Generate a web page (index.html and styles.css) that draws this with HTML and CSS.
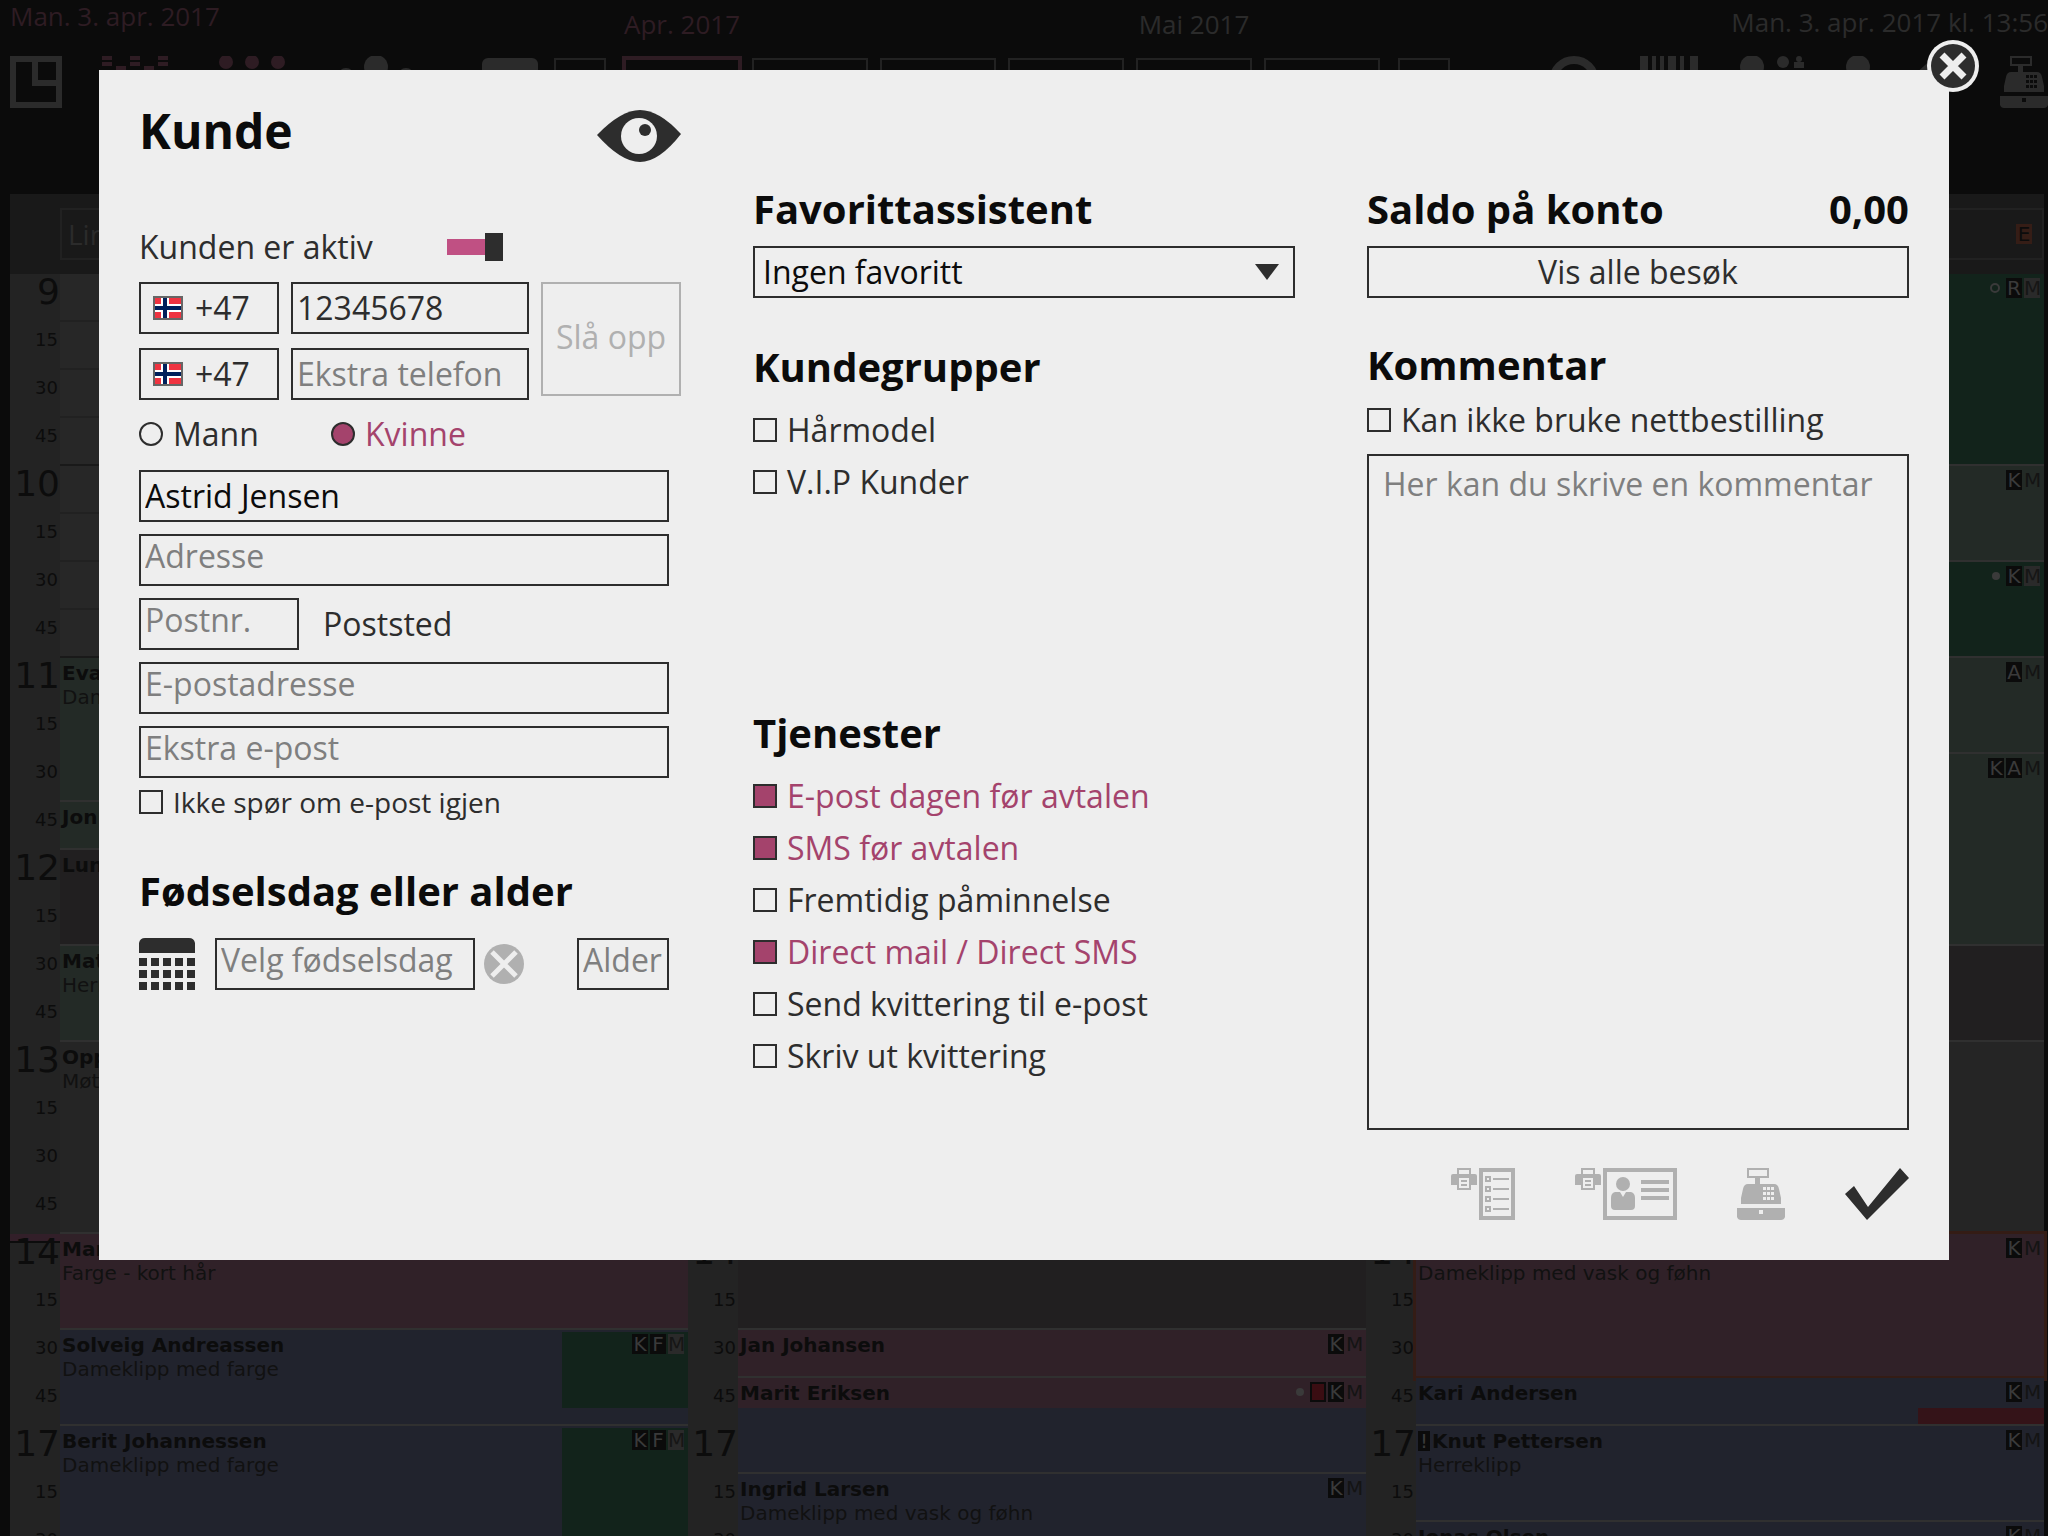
FILE: index.html
```html
<!DOCTYPE html>
<html lang="no">
<head>
<meta charset="utf-8">
<meta name="viewport" content="width=device-width, initial-scale=1">
<title>Kunde</title>
<link rel="stylesheet" href="styles.css">
</head>
<body>
<svg class="defs" aria-hidden="true">
  <symbol id="register" viewBox="0 0 48 52">
    <path fill="currentColor" fill-rule="evenodd" d="M10 0h22v10h-9v6h14q4 0 5 5l2 9v6H4v-6l2-9q1-5 5-5h7v-6h-8zM12 2v6h18V2zM26 19v3h3v-3zM30 19v3h3v-3zM34 19v3h3v-3zM26 24v3h3v-3zM30 24v3h3v-3zM34 24v3h3v-3zM26 29v3h3v-3zM30 29v3h3v-3zM34 29v3h3v-3zM0 40h48v9q-1 3-4 3H4q-3 0-4-3zM22 42v4h4v-4z"/>
  </symbol>
  <symbol id="printer" viewBox="0 0 26 22">
    <path fill="currentColor" fill-rule="evenodd" d="M6 0h14v6h4q2 0 2 2v9h-6v5H6v-5H0V8q0-2 2-2h4zM8 2v4h10V2zM8 10v10h10V10zM10 12h6v2h-6zM10 16h6v2h-6z"/>
  </symbol>
  <symbol id="flag" viewBox="0 0 30 24">
    <path fill="#ef3340" d="M0 0h30v24H0z"/>
    <path fill="#fff" d="M8 0h8v24H8zM0 8h30v8H0z"/>
    <path fill="#00205b" d="M10 0h4v24h-4zM0 10h30v4H0z"/>
    <path fill="none" stroke="#666" stroke-width="2" d="M1 1h28v22H1z"/>
  </symbol>
</svg>

<header class="topbar">
  <div class="topbar-left">
    <p class="today">Man. 3. apr. 2017</p>
    <div class="tools">
      <svg width="52" height="52" viewBox="0 0 52 52"><path fill="none" stroke="currentColor" stroke-width="6" d="M3 3h46v46H3zM25 3v24h24"/></svg>
      <svg class="pink" width="66" height="52" viewBox="0 0 66 52"><path fill="currentColor" d="M0 0h10v4H0zM0 6h10v4H0zM14 10h10v4H14zM28 0h10v4H28zM28 6h10v4H28zM42 10h10v4H42zM56 0h10v4H56zM56 6h10v4H56z"/></svg>
      <svg class="pink" width="77" height="52" viewBox="-11 0 77 52"><g fill="currentColor"><circle cx="7" cy="6" r="7"/><circle cx="33" cy="6" r="7"/><circle cx="59" cy="6" r="7"/></g></svg>
      <svg width="87" height="52" viewBox="-15 0 87 52"><g fill="currentColor"><circle cx="36" cy="11" r="12"/><circle cx="6" cy="20" r="8"/><circle cx="66" cy="20" r="8"/></g></svg>
      <svg width="86" height="52" viewBox="-30 0 86 52"><rect y="2" width="56" height="40" rx="6" fill="currentColor"/></svg>
    </div>
  </div>
  <nav class="dates" aria-label="Datoer">
    <div class="date step"><button type="button" aria-label="Forrige"></button></div>
    <div class="date current"><span>Apr. 2017</span><button type="button" aria-label="Dag 1"></button></div>
    <div class="date"><button type="button" aria-label="Dag 2"></button></div>
    <div class="date"><button type="button" aria-label="Dag 3"></button></div>
    <div class="date"><button type="button" aria-label="Dag 4"></button></div>
    <div class="date"><span>Mai 2017</span><button type="button" aria-label="Dag 5"></button></div>
    <div class="date"><button type="button" aria-label="Dag 6"></button></div>
    <div class="date step"><button type="button" aria-label="Neste"></button></div>
  </nav>
  <div class="topbar-right">
    <p class="clock">Man. 3. apr. 2017 kl. 13:56</p>
    <div class="tools">
      <svg width="52" height="52" viewBox="0 0 52 52"><circle cx="26" cy="25" r="21" fill="none" stroke="currentColor" stroke-width="8"/></svg>
      <svg width="58" height="52" viewBox="0 0 58 52"><path fill="currentColor" d="M0 0h8v40H0zM12 0h4v40h-4zM20 0h4v40h-4zM28 0h8v40h-8zM40 0h4v40h-4zM50 0h8v40h-8z"/></svg>
      <svg width="68" height="52" viewBox="0 0 68 52"><g fill="currentColor"><circle cx="14" cy="11" r="12"/><circle cx="45" cy="6" r="6"/><circle cx="61" cy="3" r="3"/><path d="M36 14h8v4h-8zM48 14h8v4h-8zM56 6h10v6H56z"/></g></svg>
      <svg width="24" height="52" viewBox="0 0 24 52"><circle cx="12" cy="11" r="12" fill="currentColor"/></svg>
      <svg width="50" height="52" viewBox="0 0 50 52"><path fill="currentColor" d="M25 0l24 24-18 18q-6 0-12-6L3 20z"/></svg>
      <svg width="48" height="52"><use href="#register"/></svg>
    </div>
  </div>
</header>

<main class="calendar">
  <section class="day">
    <div class="day-head"><div class="staff">Lin</div></div>
    <div class="day-body">
      <ol class="times">
        <li class="hour">9</li><li>15</li><li>30</li><li>45</li>
        <li class="hour">10</li><li>15</li><li>30</li><li>45</li>
        <li class="hour">11</li><li>15</li><li>30</li><li>45</li>
        <li class="hour">12</li><li>15</li><li>30</li><li>45</li>
        <li class="hour">13</li><li>15</li><li>30</li><li>45</li>
        <li class="hour now">14</li><li>15</li><li>30</li><li>45</li>
        <li class="hour">17</li><li>15</li><li>30</li>
      </ol>
      <div class="events">
        <div class="event free" style="--slots:4"></div>
        <div class="event free" style="--slots:4"></div>
        <div class="event mint" style="--slots:3"><b>Eva</b><span>Dameklipp</span></div>
        <div class="event mint" style="--slots:1"><b>Jon</b></div>
        <div class="event closed" style="--slots:2"><b>Lunsj</b></div>
        <div class="event mint" style="--slots:2"><b>Mats</b><span>Herreklipp</span></div>
        <div class="event open" style="--slots:4"><b>Opplæring</b><span>Møte</span></div>
        <div class="event rose" style="--slots:2"><b>Maria</b><span>Farge - kort hår</span></div>
        <div class="event blue" style="--slots:2"><b>Solveig Andreassen</b><span>Dameklipp med farge</span><div class="part green"></div><div class="tags"><i>K</i><i>F</i><i class="soft">M</i></div></div>
        <div class="event blue" style="--slots:3"><b>Berit Johannessen</b><span>Dameklipp med farge</span><div class="part green tall"></div><div class="tags"><i>K</i><i>F</i><i class="soft">M</i></div></div>
      </div>
    </div>
  </section>
  <section class="day">
    <div class="day-head"><div class="staff"></div></div>
    <div class="day-body">
      <ol class="times">
        <li class="hour">9</li><li>15</li><li>30</li><li>45</li>
        <li class="hour">10</li><li>15</li><li>30</li><li>45</li>
        <li class="hour">11</li><li>15</li><li>30</li><li>45</li>
        <li class="hour">12</li><li>15</li><li>30</li><li>45</li>
        <li class="hour">13</li><li>15</li><li>30</li><li>45</li>
        <li class="hour">14</li><li>15</li><li>30</li><li>45</li>
        <li class="hour">17</li><li>15</li><li>30</li>
      </ol>
      <div class="events">
        <div class="event closed" style="--slots:22"></div>
        <div class="event rose" style="--slots:1"><b>Jan Johansen</b><div class="tags"><i>K</i><i class="none">M</i></div></div>
        <div class="event rose-blue" style="--slots:2"><b>Marit Eriksen</b><div class="tags"><em class="dot"></em><i class="alert"></i><i>K</i><i class="none">M</i></div></div>
        <div class="event blue" style="--slots:2"><b>Ingrid Larsen</b><span>Dameklipp med vask og føhn</span><div class="tags"><i>K</i><i class="none">M</i></div></div>
      </div>
    </div>
  </section>
  <section class="day">
    <div class="day-head"><div class="staff"><mark>E</mark></div></div>
    <div class="day-body">
      <ol class="times">
        <li class="hour">9</li><li>15</li><li>30</li><li>45</li>
        <li class="hour">10</li><li>15</li><li>30</li><li>45</li>
        <li class="hour">11</li><li>15</li><li>30</li><li>45</li>
        <li class="hour">12</li><li>15</li><li>30</li><li>45</li>
        <li class="hour">13</li><li>15</li><li>30</li><li>45</li>
        <li class="hour">14</li><li>15</li><li>30</li><li>45</li>
        <li class="hour">17</li><li>15</li><li>30</li>
      </ol>
      <div class="events">
        <div class="event green" style="--slots:4"><div class="tags"><em class="ring"></em><i>R</i><i class="soft">M</i></div></div>
        <div class="event mint" style="--slots:2"><div class="tags"><i>K</i><i class="none">M</i></div></div>
        <div class="event green" style="--slots:2"><div class="tags"><em class="dot"></em><i>K</i><i class="soft">M</i></div></div>
        <div class="event mint" style="--slots:2"><div class="tags"><i>A</i><i class="none">M</i></div></div>
        <div class="event mint" style="--slots:4"><div class="tags"><i>K</i><i>A</i><i class="none">M</i></div></div>
        <div class="event closed" style="--slots:2"></div>
        <div class="event open" style="--slots:4"></div>
        <div class="event rose picked" style="--slots:3"><b>Kristin</b><span>Dameklipp med vask og føhn</span><div class="tags"><i>K</i><i class="none">M</i></div></div>
        <div class="event blue" style="--slots:1"><b>Kari Andersen</b><div class="part red"></div><div class="tags"><i>K</i><i class="none">M</i></div></div>
        <div class="event blue" style="--slots:2"><b><i class="bang">!</i>Knut Pettersen</b><span>Herreklipp</span><div class="tags"><i>K</i><i class="none">M</i></div></div>
        <div class="event blue" style="--slots:1"><b>Jonas Olsen</b><div class="tags"><i>K</i><i class="none">M</i></div></div>
      </div>
    </div>
  </section>
</main>

<div class="overlay">
  <form class="modal" role="dialog" aria-labelledby="title">
    <button class="close" type="button" aria-label="Lukk">
      <svg width="52" height="52" viewBox="0 0 52 52"><circle cx="26" cy="26" r="26" fill="#eee"/><circle cx="26" cy="26" r="22" fill="#2d2d2d"/><path stroke="#eee" stroke-width="7" d="M15 15l22 22M37 15L15 37"/></svg>
    </button>

    <section class="col">
      <div class="title-row">
        <h1 id="title">Kunde</h1>
        <button class="plain" type="button" aria-label="Vis">
          <svg width="84" height="52" viewBox="0 0 84 52"><path fill="#2d2d2d" d="M0 25Q24 0 43 0T84 24Q62 52 43 52T0 25z"/><circle cx="42" cy="26" r="18" fill="#eee"/><circle cx="48" cy="20" r="6" fill="#2d2d2d"/></svg>
        </button>
      </div>
      <div class="active-row">
        <label for="active">Kunden er aktiv</label>
        <input class="switch" id="active" type="checkbox" role="switch" checked>
      </div>
      <div class="phones">
        <button class="box code" type="button"><svg width="30" height="24"><use href="#flag"/></svg>+47</button>
        <input class="box" type="tel" aria-label="Telefon" value="12345678">
        <button class="box lookup" type="button" disabled>Slå opp</button>
        <button class="box code" type="button"><svg width="30" height="24"><use href="#flag"/></svg>+47</button>
        <input class="box" type="tel" aria-label="Ekstra telefon" placeholder="Ekstra telefon">
      </div>
      <div class="genders">
        <label class="choice"><input type="radio" name="gender"><span>Mann</span></label>
        <label class="choice"><input type="radio" name="gender" checked><span>Kvinne</span></label>
      </div>
      <div class="fields">
        <input class="box name" type="text" aria-label="Navn" value="Astrid Jensen">
        <input class="box high" type="text" aria-label="Adresse" placeholder="Adresse">
        <div class="post">
          <input class="box high" id="zip" type="text" aria-label="Postnr." placeholder="Postnr.">
          <label for="zip">Poststed</label>
        </div>
        <input class="box high" type="email" aria-label="E-postadresse" placeholder="E-postadresse">
        <input class="box high" type="email" aria-label="Ekstra e-post" placeholder="Ekstra e-post">
      </div>
      <label class="choice small"><input type="checkbox"><span>Ikke spør om e-post igjen</span></label>
      <h2>Fødselsdag eller alder</h2>
      <div class="birthday">
        <button class="plain" type="button" aria-label="Kalender">
          <svg width="56" height="52" viewBox="0 0 56 52"><path fill="#2d2d2d" d="M0 15V5Q1 0 6 0h44q5 0 6 5v10zM0 20h8v8H0zM12 20h8v8h-8zM24 20h8v8h-8zM36 20h8v8h-8zM48 20h8v8h-8zM0 32h8v8H0zM12 32h8v8h-8zM24 32h8v8h-8zM36 32h8v8h-8zM48 32h8v8h-8zM0 44h8v8H0zM12 44h8v8h-8zM24 44h8v8h-8zM36 44h8v8h-8zM48 44h8v8h-8z"/></svg>
        </button>
        <input class="box high born" type="text" aria-label="Fødselsdag" placeholder="Velg fødselsdag">
        <button class="plain" type="button" aria-label="Tøm fødselsdag">
          <svg width="40" height="40" viewBox="0 0 40 40"><circle cx="20" cy="20" r="20" fill="#b0b0b0"/><path stroke="#eee" stroke-width="5" d="M8 8l24 24M32 8L8 32"/></svg>
        </button>
        <input class="box high age" type="text" aria-label="Alder" placeholder="Alder">
      </div>
    </section>

    <section class="col lower">
      <h2><label for="favourite">Favorittassistent</label></h2>
      <div class="select">
        <select class="box" id="favourite"><option>Ingen favoritt</option></select>
        <svg width="24" height="16" viewBox="0 0 24 16"><path fill="#2d2d2d" d="M0 0h24L12 16z"/></svg>
      </div>
      <h2>Kundegrupper</h2>
      <div class="choices groups">
        <label class="choice"><input type="checkbox"><span>Hårmodel</span></label>
        <label class="choice"><input type="checkbox"><span>V.I.P Kunder</span></label>
      </div>
      <h2>Tjenester</h2>
      <div class="choices">
        <label class="choice"><input type="checkbox" checked><span>E-post dagen før avtalen</span></label>
        <label class="choice"><input type="checkbox" checked><span>SMS før avtalen</span></label>
        <label class="choice"><input type="checkbox"><span>Fremtidig påminnelse</span></label>
        <label class="choice"><input type="checkbox" checked><span>Direct mail / Direct SMS</span></label>
        <label class="choice"><input type="checkbox"><span>Send kvittering til e-post</span></label>
        <label class="choice"><input type="checkbox"><span>Skriv ut kvittering</span></label>
      </div>
    </section>

    <section class="col lower">
      <h2 class="balance"><span>Saldo på konto</span><span>0,00</span></h2>
      <button class="box" type="button">Vis alle besøk</button>
      <h2 class="comment-title"><label for="comment">Kommentar</label></h2>
      <label class="choice"><input type="checkbox"><span>Kan ikke bruke nettbestilling</span></label>
      <textarea class="box" id="comment" placeholder="Her kan du skrive en kommentar"></textarea>
      <div class="actions">
        <button class="plain" type="button" disabled aria-label="Skriv ut liste">
          <svg width="64" height="52" viewBox="0 0 64 52"><use href="#printer" width="26" height="22"/><path fill="none" stroke="currentColor" stroke-width="4" d="M30 2h32v48H30z"/><path fill="none" stroke="currentColor" stroke-width="2" d="M35 9h4v4h-4zM35 19h4v4h-4zM35 29h4v4h-4zM35 39h4v4h-4zM42 11h16M42 21h16M42 31h16M42 41h16"/></svg>
        </button>
        <button class="plain" type="button" disabled aria-label="Skriv ut kundekort">
          <svg width="102" height="52" viewBox="0 0 102 52"><use href="#printer" width="26" height="22"/><path fill="none" stroke="currentColor" stroke-width="4" d="M30 2h70v48H30zM66 14h28M66 22h28M66 30h28"/><circle cx="48" cy="16" r="7" fill="currentColor"/><path fill="currentColor" d="M40 24h5l3 5 3-5h5q4 1 4 6v8q0 4-4 4H40q-4 0-4-4v-8q0-5 4-6z"/></svg>
        </button>
        <button class="plain" type="button" disabled aria-label="Kasse"><svg width="48" height="52"><use href="#register"/></svg></button>
        <button class="plain" type="submit" aria-label="Lagre">
          <svg width="64" height="52" viewBox="0 0 64 52"><path fill="#2d2d2d" d="M0 26l9-8 14 21L55 0l9 10-42 42z"/></svg>
        </button>
      </div>
    </section>
  </form>
</div>
</body>
</html>
```

FILE: styles.css
```css
* {
  box-sizing: border-box;
}

body,
h1,
h2,
p,
ol {
  margin: 0;
  padding: 0;
}

body {
  height: 100vh;
  overflow: hidden;
  background: #0b0b0b;
  color: #2d2d2d;
  font: 32px/44px "Open Sans", sans-serif;
}

svg {
  display: block;
  flex: none;
}

.defs {
  position: absolute;
  width: 0;
  height: 0;
}

/* Top bar, dimmed */

.topbar {
  display: flex;
  height: 194px;
  padding-left: 10px;
  font-size: 26px;
  line-height: 36px;
  color: #2b2b2b;
}

.topbar-left {
  width: 544px;
}

.topbar-right {
  flex: 1;
}

.today {
  height: 56px;
  line-height: 32px;
  color: #2e1c23;
}

.clock {
  height: 56px;
  padding-top: 4px;
  text-align: right;
}

.tools {
  display: flex;
  gap: 40px;
}

.topbar-right .tools {
  justify-content: flex-end;
}

.pink {
  color: #2e1c23;
}

.dates {
  display: flex;
  gap: 12px;
}

.date {
  display: flex;
  flex-direction: column;
  justify-content: flex-end;
  width: 116px;
  height: 108px;
  text-align: center;
  white-space: nowrap;
}

.date span {
  margin-bottom: 16px;
}

.date button {
  height: 50px;
  padding: 0;
  border: 2px solid #222;
  background: none;
}

.step {
  width: 52px;
}

.step:first-child {
  margin-right: 6px;
}

.step:last-child {
  margin-left: 6px;
}

.current {
  color: #2e1c23;
}

.current button {
  border: 2px solid #2e1c23;
  outline: 2px solid #2e1c23;
}

/* Calendar, dimmed */

.calendar {
  display: flex;
  margin: 0 4px 0 10px;
  color: #0c0c0c;
  font: 20px/24px "DejaVu Sans", sans-serif;
}

.day {
  flex: 1;
  min-width: 0;
}

.day-head {
  height: 80px;
  padding: 14px 0 0 50px;
  background: #191919;
}

.staff {
  display: flex;
  align-items: center;
  height: 52px;
  padding: 0 10px 0 6px;
  border: 2px solid #212121;
  color: #2b2b2b;
  font: 28px/40px "Open Sans", sans-serif;
}

.staff mark {
  width: 16px;
  margin-left: auto;
  background: #351d16;
  color: #0c0c0c;
  font: 20px/20px "DejaVu Sans", sans-serif;
  text-align: center;
}

.day-body {
  display: flex;
}

.times {
  width: 50px;
  background: #232323;
  list-style: none;
  text-align: right;
  font-size: 18px;
  line-height: 36px;
}

.times li {
  height: 48px;
  padding-right: 2px;
}

.times .hour {
  padding-right: 0;
  font-size: 36px;
}

.times .now {
  background: linear-gradient(#321f29 7px, #0c0c0c 7px, #0c0c0c 9px, transparent 9px);
}

.events {
  flex: 1;
  min-width: 0;
}

.event {
  position: relative;
  height: calc(var(--slots) * 48px);
  padding: 3px 2px 0;
  border-bottom: 2px solid #303030;
  overflow: hidden;
  white-space: nowrap;
}

.event b,
.event span {
  display: block;
}

.event span {
  color: #111;
}

.free {
  border-bottom-color: #191919;
  background: repeating-linear-gradient(#272727 0 46px, #212121 46px 48px);
}

.open {
  background: #252525;
}

.closed {
  background: #211f20;
}

.mint {
  background: #232a26;
}

.green {
  background: #12231b;
}

.rose {
  background: #302128;
}

.blue {
  background: #21232d;
}

.rose-blue {
  background: linear-gradient(#302128 30px, #21232d 30px);
}

.picked {
  overflow: visible;
  border-bottom-color: #341c15;
  outline: 3px solid #341c15;
}

.part {
  position: absolute;
  top: 2px;
  right: 0;
  width: 20%;
  height: 76px;
}

.tall {
  height: 100%;
}

.red {
  top: 30px;
  height: 16px;
  background: #341318;
}

.tags {
  position: absolute;
  top: 4px;
  right: 4px;
  display: flex;
  align-items: center;
  gap: 2px;
}

.tags i,
.bang {
  width: 16px;
  height: 20px;
  background: #0b0b0b;
  color: #3a3a3a;
  font-style: normal;
  font-weight: 400;
  line-height: 20px;
  text-align: center;
}

.bang {
  display: inline-block;
  width: 12px;
  margin-right: 2px;
}

.tags .soft {
  background: #2a2a2a;
  color: #161616;
}

.tags .none {
  background: none;
  color: #141414;
}

.tags .alert {
  border: 2px solid #0b0b0b;
  background: #3a0d12;
}

.dot,
.ring {
  width: 8px;
  height: 8px;
  margin-right: 4px;
  border-radius: 50%;
  background: #3a3a3a;
}

.ring {
  width: 10px;
  height: 10px;
  border: 2px solid #3a3a3a;
  background: none;
}

/* Customer dialog */

.overlay {
  position: fixed;
  inset: 0;
  padding: 70px 99px;
}

.modal {
  position: relative;
  display: grid;
  grid-template-columns: repeat(3, minmax(0, 1fr));
  gap: 72px;
  padding: 40px;
  background: #eee;
}

.close {
  position: absolute;
  top: -30px;
  right: -30px;
  padding: 0;
  border: 0;
  background: none;
}

.plain {
  padding: 0;
  border: 0;
  background: none;
  color: inherit;
}

.plain:disabled {
  color: #b0b0b0;
}

.col {
  display: flex;
  flex-direction: column;
}

.lower {
  padding-top: 70px;
}

h1 {
  color: #0b0b0b;
  font-size: 48px;
  line-height: 42px;
}

h2 {
  margin: 42px 0 10px;
  color: #0b0b0b;
  font-size: 40px;
  line-height: 54px;
}

.lower h2:first-child {
  margin-top: 2px;
}

.box {
  width: 100%;
  min-width: 0;
  height: 52px;
  padding: 0 4px;
  border: 2px solid #2d2d2d;
  border-radius: 0;
  background: none;
  color: #2d2d2d;
  font: inherit;
}

input.box {
  padding-bottom: 2px;
}

.box::placeholder {
  color: #7f7f7f;
  opacity: 1;
}

input.high {
  padding-bottom: 10px;
  line-height: 38px;
}

.title-row {
  display: flex;
  justify-content: space-between;
  height: 52px;
}

.active-row {
  display: flex;
  align-items: center;
  height: 50px;
  margin: 60px 0 10px;
}

.active-row label {
  width: 308px;
}

.switch {
  appearance: none;
  width: 56px;
  height: 28px;
  margin: 0;
  background:
    linear-gradient(#2d2d2d, #2d2d2d) right / 18px 28px no-repeat,
    linear-gradient(#c05083, #c05083) left / 38px 16px no-repeat;
}

.phones {
  display: grid;
  grid-template-columns: 140px 1fr 140px;
  gap: 14px 12px;
}

.code {
  display: flex;
  align-items: center;
  gap: 12px;
  padding: 0 12px;
}

.lookup {
  grid-area: 1 / 3 / 3 / 4;
  height: 114px;
  padding: 0 0 4px;
}

.lookup:disabled {
  border-color: #b0b0b0;
  color: #b0b0b0;
}

.genders {
  display: flex;
  margin: 8px 0 10px;
}

.genders .choice {
  width: 192px;
}

.fields {
  display: grid;
  gap: 12px;
  margin-right: 12px;
}

.name,
.select .box {
  color: #0b0b0b;
}

.post {
  display: flex;
  align-items: center;
  gap: 24px;
}

.post .box {
  width: 160px;
}

.choice {
  display: flex;
  align-items: center;
  gap: 10px;
  height: 52px;
}

.choice input {
  appearance: none;
  flex: none;
  width: 24px;
  height: 24px;
  margin: 0;
  border: 2px solid #2d2d2d;
}

.choice input[type="radio"] {
  border-radius: 50%;
}

.choice input:checked {
  background: #a4436c;
}

.choice input:checked + span {
  color: #a4436c;
}

.small {
  height: 40px;
  margin-top: 4px;
  font-size: 28px;
}

.birthday {
  display: flex;
  align-items: center;
  margin: 10px 12px 0 0;
}

.born {
  width: 260px;
  margin: 0 9px 0 20px;
}

.age {
  width: 92px;
  margin-left: auto;
}

.select {
  display: grid;
  align-items: center;
}

.select .box {
  grid-area: 1 / 1;
  appearance: none;
  padding: 0 8px;
}

.select svg {
  grid-area: 1 / 1;
  justify-self: end;
  margin-right: 16px;
  pointer-events: none;
}

.groups {
  height: 260px;
}

.balance {
  display: flex;
  justify-content: space-between;
}

.comment-title {
  margin: 40px 0 2px;
}

textarea.box {
  height: 676px;
  margin-top: 8px;
  padding: 6px 14px;
  resize: none;
}

.actions {
  display: flex;
  justify-content: flex-end;
  gap: 60px;
  margin-top: 38px;
}
```
